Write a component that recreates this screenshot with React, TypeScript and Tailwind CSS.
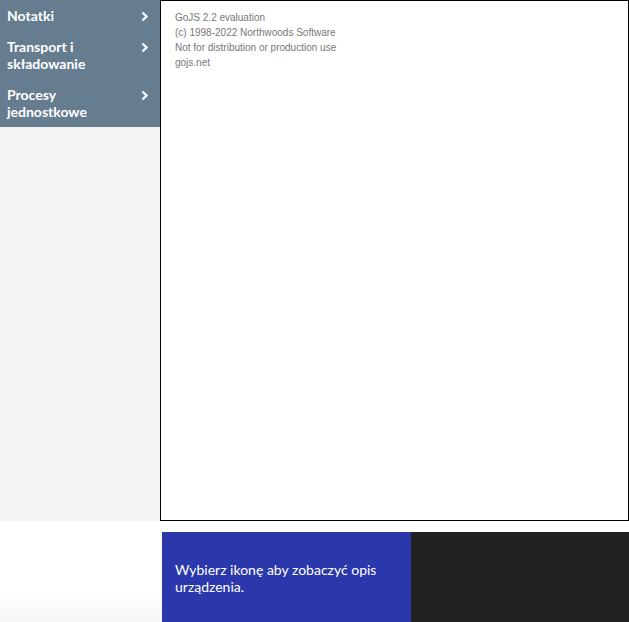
import React from "react";

const categories = [
    { label: ["Notatki"] },
    { label: ["Transport i", "składowanie"] },
    { label: ["Procesy", "jednostkowe"] },
];

const Chevron = () => (
    <svg width="8" height="11" viewBox="0 0 8 11" className="mt-[4px] shrink-0">
        <path d="M1.5 1.5 L5.5 5.5 L1.5 9.5" fill="none" stroke="white" strokeWidth="2.4" strokeLinejoin="miter" />
    </svg>
);

const Palette = () => (
    <div className="w-[160px] h-[521px] bg-[#f4f4f4] shrink-0">
        <ul className="bg-[#667c8f]">
            {categories.map((cat) => (
                <li key={cat.label[0]} className="flex items-start justify-between pl-[7px] pr-[11px] py-[7px] cursor-pointer">
                    <span className="text-white font-bold text-[14px] leading-[17px]">
                        {cat.label.map((line) => (
                            <span key={line} className="block">{line}</span>
                        ))}
                    </span>
                    <Chevron />
                </li>
            ))}
        </ul>
    </div>
);

const Diagram = () => (
    <div className="flex-1 h-[521px] border border-black bg-white">
        <div className="pl-[14px] pt-[9px] text-[10px] leading-[15px] text-[#777777] font-['Liberation_Sans',Arial,sans-serif]">
            <div>GoJS 2.2 evaluation</div>
            <div>(c) 1998-2022 Northwoods Software</div>
            <div>Not for distribution or production use</div>
            <div>gojs.net</div>
        </div>
    </div>
);

export default function App() {
    return (
        <div className="w-[629px] h-[622px] overflow-hidden bg-white font-['Lato','Noto_Sans',sans-serif]">
            <div className="flex">
                <Palette />
                <Diagram />
            </div>
            <div className="flex mt-[11px] h-[90px]">
                <div className="w-[162px] h-full bg-gradient-to-b from-white from-70% to-[#f6f6f6]" />
                <div className="w-[249px] h-full bg-[#2a38ab] pl-[13px] pr-[10px] pt-[29px]">
                    <p className="text-white text-[14px] leading-[17px]">
                        Wybierz ikonę aby zobaczyć opis urządzenia.
                    </p>
                </div>
                <div className="flex-1 h-full bg-[#222222]" />
            </div>
        </div>
    );
}
